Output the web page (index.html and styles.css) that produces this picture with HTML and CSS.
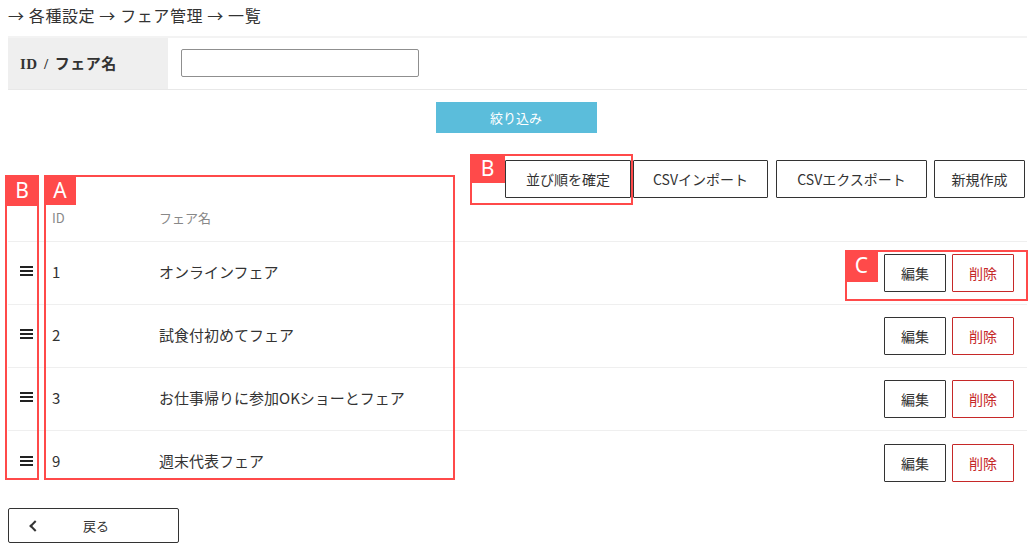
FILE: index.html
```html
<!DOCTYPE html>
<html lang="ja">
<head>
    <meta charset="UTF-8">
    <meta name="viewport" content="width=device-width, initial-scale=1.0">
    <title>フェア管理 一覧</title>
    <link rel="stylesheet" href="styles.css">
</head>
<body>
<div id="page">

    <div class="breadcrumb">→ 各種設定 → フェア管理 → 一覧</div>

    <div class="search-table">
        <div class="search-label">ID / フェア名</div>
        <div class="search-field"><input type="text" class="search-input"></div>
    </div>

    <div class="search-submit">
        <button class="btn-filter">絞り込み</button>
    </div>

    <div class="actions">
        <button class="btn btn-sort">並び順を確定</button>
        <button class="btn btn-import">CSVインポート</button>
        <button class="btn btn-export">CSVエクスポート</button>
        <button class="btn btn-new">新規作成</button>
    </div>

    <div class="list">
        <div class="list-row list-head">
            <div class="col-handle"></div>
            <div class="col-id">ID</div>
            <div class="col-name">フェア名</div>
            <div class="col-ops"></div>
        </div>
        <div class="list-row">
            <div class="col-handle"><span class="handle"></span></div>
            <div class="col-id">1</div>
            <div class="col-name">オンラインフェア</div>
            <div class="col-ops"><button class="btn btn-edit">編集</button><button class="btn btn-delete">削除</button></div>
        </div>
        <div class="list-row">
            <div class="col-handle"><span class="handle"></span></div>
            <div class="col-id">2</div>
            <div class="col-name">試食付初めてフェア</div>
            <div class="col-ops"><button class="btn btn-edit">編集</button><button class="btn btn-delete">削除</button></div>
        </div>
        <div class="list-row">
            <div class="col-handle"><span class="handle"></span></div>
            <div class="col-id">3</div>
            <div class="col-name">お仕事帰りに参加OKショーとフェア</div>
            <div class="col-ops"><button class="btn btn-edit">編集</button><button class="btn btn-delete">削除</button></div>
        </div>
        <div class="list-row last">
            <div class="col-handle"><span class="handle"></span></div>
            <div class="col-id">9</div>
            <div class="col-name">週末代表フェア</div>
            <div class="col-ops"><button class="btn btn-edit">編集</button><button class="btn btn-delete">削除</button></div>
        </div>
    </div>

    <button class="btn-back"><span class="chev"></span><span class="back-text">戻る</span></button>

    <!-- 注釈 -->
    <div class="note note-handle"><span class="note-tag">B</span></div>
    <div class="note note-list"><span class="note-tag">A</span></div>
    <div class="note note-sort"><span class="note-tag">B</span></div>
    <div class="note note-ops"><span class="note-tag">C</span></div>

</div>
</body>
</html>
```

FILE: styles.css
```css
body {
    margin: 0;
    padding: 0;
    background: #fff;
    color: #333;
    font-family: "Noto Sans CJK JP", "Noto Sans", sans-serif;
}
#page {
    position: relative;
    width: 1019px;
    padding: 0 8px;
    height: 550px;
}
.breadcrumb {
    font-size: 16px;
    line-height: 22px;
    letter-spacing: 0.6px;
    padding-top: 4px;
    height: 32px;
}
.search-table {
    display: flex;
    border-top: 2px solid #f3f3f3;
    border-bottom: 1px solid #e8e8e8;
    height: 51px;
}
.search-label {
    width: 148px;
    padding-left: 12px;
    background: #efefef;
    font-family: "Liberation Serif", "Noto Sans CJK JP", serif;
    font-weight: bold;
    font-size: 15px;
    word-spacing: 2px;
    letter-spacing: 0.5px;
    display: flex;
    align-items: center;
    padding-bottom: 2px;
}
.search-field {
    display: flex;
    align-items: center;
    padding-left: 13px;
}
.search-input {
    width: 232px;
    height: 24px;
    border: 1px solid #8f8f8f;
    border-radius: 2px;
    padding: 1px 2px;
    margin-top: -2px;
}
.search-submit {
    display: flex;
    justify-content: center;
    padding-top: 12px;
}
.btn-filter {
    width: 161px;
    height: 31px;
    background: #5bbddb;
    border: none;
    color: #fff;
    font-family: "Noto Sans CJK JP", sans-serif;
    font-size: 13px;
    margin-left: -3px;
}
.actions {
    display: flex;
    justify-content: flex-end;
    margin-top: 27px;
    padding-right: 2px;
}
.btn {
    height: 38px;
    border: 1px solid #333;
    background: #fff;
    color: #333;
    font-family: "Noto Sans CJK JP", sans-serif;
    font-size: 14px;
    padding: 0;
    border-radius: 1px;
}
.btn-sort {
    width: 126px;
}
.btn-import {
    width: 135px;
    margin-left: 2px;
}
.btn-export {
    width: 151px;
    margin-left: 8px;
}
.btn-new {
    width: 91px;
    margin-left: 7px;
}
.list-row {
    display: flex;
    align-items: center;
    height: 63px;
    padding-bottom: 4px;
    box-sizing: border-box;
    border-bottom: 1px solid #efefef;
    font-size: 15px;
}
.list-row.last {
    border-bottom: none;
}
.list-head {
    height: 44px;
    align-items: flex-start;
    padding-bottom: 0;
    font-size: 13px;
    color: #888;
}
.list-head > div {
    padding-top: 10px;
}
.col-handle {
    width: 36px;
    display: flex;
    justify-content: center;
}
.col-id {
    width: 107px;
    padding-left: 8px;
}
.col-name {
    flex: 1;
}
.col-ops {
    display: flex;
    gap: 6px;
    padding-right: 13px;
    padding-top: 4px;
}
.handle {
    display: block;
    width: 13px;
    height: 2px;
    background: #222;
    box-shadow: 0 -4px 0 #222, 0 4px 0 #222;
    margin-left: 1px;
}
.btn-edit,
.btn-delete {
    width: 62px;
}
.btn-delete {
    border-color: #c62828;
    color: #c62828;
}
.btn-back {
    display: flex;
    align-items: center;
    margin-top: 14px;
    width: 171px;
    height: 35px;
    border: 1px solid #333;
    border-radius: 2px;
    background: #fff;
    color: #333;
    font-family: "Noto Sans CJK JP", sans-serif;
    font-size: 13px;
    padding: 0;
}
.chev {
    width: 6px;
    height: 6px;
    border-left: 2px solid #333;
    border-bottom: 2px solid #333;
    transform: rotate(45deg);
    margin-left: 22px;
}
.back-text {
    margin-left: 44px;
}
.note {
    position: absolute;
    border: 2px solid #ff4a4a;
    box-sizing: border-box;
}
.note-tag {
    position: absolute;
    left: -2px;
    top: -2px;
    background: #ff4a4a;
    color: #fff;
    font-family: "Noto Sans", sans-serif;
    font-size: 21px;
    line-height: 30px;
    text-align: center;
}
.note-handle {
    left: 5px;
    top: 175px;
    width: 34px;
    height: 305px;
}
.note-handle .note-tag {
    width: 34px;
    height: 31px;
}
.note-list {
    left: 44px;
    top: 175px;
    width: 411px;
    height: 305px;
}
.note-list .note-tag {
    width: 32px;
    height: 30px;
}
.note-sort {
    left: 470px;
    top: 154px;
    width: 163px;
    height: 51px;
}
.note-sort .note-tag {
    width: 35px;
    height: 29px;
    line-height: 28px;
}
.note-ops {
    left: 845px;
    top: 250px;
    width: 183px;
    height: 51px;
}
.note-ops .note-tag {
    width: 33px;
    height: 32px;
}
```
